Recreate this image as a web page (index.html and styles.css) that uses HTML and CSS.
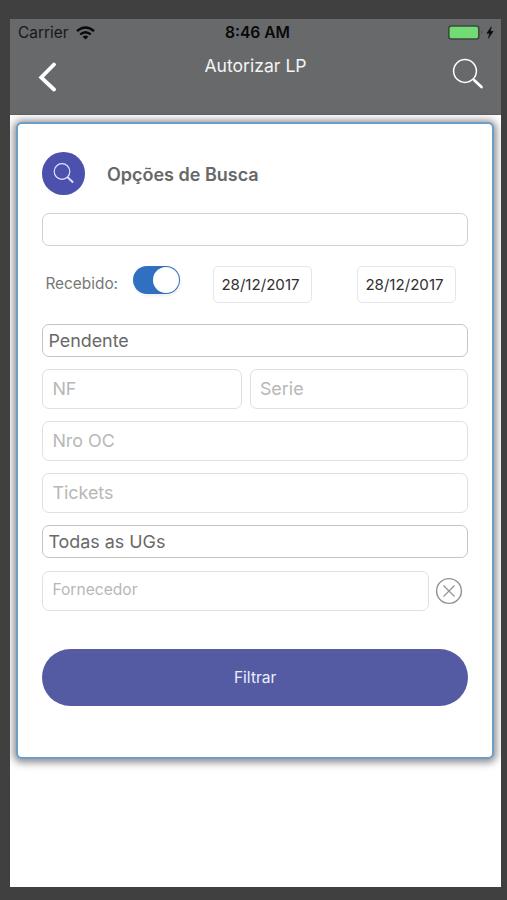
FILE: index.html
```html
<!DOCTYPE html>
<html lang="pt-BR">
<head>
<meta charset="utf-8">
<title>Autorizar LP</title>
<link rel="stylesheet" href="styles.css">
</head>
<body>
<main class="screen">
  <header class="header">
    <div class="status">
      <div class="carrier"><span>Carrier</span>
        <svg width="19" height="14" viewBox="0 0 19 14" fill="none" stroke="#090909" stroke-width="2.4"><path d="M1 5.2Q9.5-2 18 5.2"/><path d="M4.2 8.4Q9.5 4 14.8 8.4"/><path d="M6.6 10.7Q9.5 8.3 12.4 10.7L9.5 13.5Z" fill="#090909" stroke="none"/></svg>
      </div>
      <time class="clock">8:46 AM</time>
      <svg class="battery" width="47" height="16" viewBox="0 0 47 16"><rect x=".8" y="1" width="30" height="13" rx="2.5" fill="#73db73" stroke="#3e4840" stroke-width="1.6"/><path d="M33.3 5.3q1.5 2.2 0 4.4Z" fill="#353535"/><path d="M43.3 1.7 38.8 8.3h2.8l-1.2 5 4.8-7h-2.9Z" fill="#080808" stroke="#080808" stroke-width=".5"/></svg>
    </div>
    <nav class="nav">
      <svg width="20" height="30" viewBox="0 0 20 30" fill="none" stroke="#fff" stroke-width="3.8" stroke-linecap="round" stroke-linejoin="miter"><path d="M16 2.5 3.2 15.5 16 27.5"/></svg>
      <h1>Autorizar LP</h1>
      <svg class="nav-search" width="32" height="32" viewBox="0 0 32 32" fill="none" stroke="#fff"><circle cx="13" cy="13" r="11.4" stroke-width="1.5"/><path d="m21 21 2 2" stroke-width="1.6"/><path d="m22.5 22.5 7 6.5" stroke-width="2.8" stroke-linecap="round"/></svg>
    </nav>
  </header>
  <section class="card">
    <div class="heading">
      <span class="badge"><svg width="22" height="22" viewBox="0 0 22 22" fill="none" stroke="#dfe2ff"><circle cx="9" cy="8.5" r="7.8" stroke-width="1.2"/><path d="m14.5 14.1 5.6 5.4" stroke-width="2"/></svg></span>
      <h2>Opções de Busca</h2>
    </div>
    <div class="select blank"></div>
    <div class="received">
      <span class="label">Recebido:</span>
      <span class="switch"><span class="knob"></span></span>
      <div class="date first">28/12/2017</div>
      <div class="date">28/12/2017</div>
    </div>
    <div class="select"><span>Pendente</span></div>
    <div class="pair"><div class="input"><span>NF</span></div><div class="input"><span>Serie</span></div></div>
    <div class="input"><span>Nro OC</span></div>
    <div class="input"><span>Tickets</span></div>
    <div class="select"><span>Todas as UGs</span></div>
    <div class="supplier">
      <div class="input small"><span>Fornecedor</span></div>
      <svg width="28" height="28" viewBox="0 0 28 28" fill="none" stroke="#929292"><circle cx="14" cy="14" r="12.4" stroke-width="1.4"/><path d="m8.5 8.5 11 11m0-11-11 11" stroke-width="1.2"/></svg>
    </div>
    <div class="submit">Filtrar</div>
  </section>
</main>
</body>
</html>
```
FILE: styles.css
```css
* { box-sizing: border-box; }
body {
  margin: 0;
  height: 900px;
  padding: 19px 6px 13px 10px;
  overflow: hidden;
  background: #404040;
  font-family: Inter, "Liberation Sans", sans-serif;
}
.screen { height: 868px; overflow: hidden; background: #fff; }
.header { height: 96px; background: #68696b; border-bottom: 1px solid #626065; }
.status {
  display: grid;
  grid-template-columns: 1fr auto 1fr;
  align-items: center;
  height: 27px;
  padding: 0 6px 0 8px;
  color: #171717;
}
.carrier { display: flex; align-items: center; gap: 8px; font-size: 15.4px; }
.clock { padding-left: 2px; font-size: 15.6px; font-weight: 600; color: #080808; }
.battery { justify-self: end; }
.nav {
  display: grid;
  grid-template-columns: 1fr auto 1fr;
  padding: 0 17px;
  align-items: start;
}
.nav > svg { margin: 16px 0 0 11px; }
.nav h1 { margin: 8px 0 0; font-size: 17.6px; line-height: 24px; font-weight: 400; color: #f4f4f4; }
.nav .nav-search { justify-self: end; margin-top: 12px; }
.card {
  display: flex;
  flex-direction: column;
  height: 637px;
  margin: 7px 7px 0 6px;
  padding: 28.5px 24px 0 24.4px;
  border: 2px solid #6a9fc7;
  border-radius: 6px;
  background: #fff;
  box-shadow: 0 1px 7px 3px rgba(48, 43, 55, .5);
}
.heading { display: flex; align-items: center; gap: 22px; height: 42px; }
.badge {
  display: grid;
  place-items: center;
  width: 42.5px;
  height: 42.5px;
  border-radius: 50%;
  background: #4c51ae;
}
h2 { margin: 1px 0 0; font-size: 18px; font-weight: 600; color: #686868; }
.select {
  display: flex;
  align-items: center;
  height: 33px;
  padding-left: 5px;
  border: 1px solid #c4c4c4;
  border-radius: 7px;
  color: #696969;
  font-size: 17.9px;
}
.blank { margin-top: 18.5px; border-color: #d0d0d0; }
.received { display: flex; height: 37px; margin: 20px 0 21px; }
.label { width: 91px; padding: 8px 0 0 3px; font-size: 15.4px; line-height: 20px; color: #777; }
.switch {
  display: flex;
  justify-content: flex-end;
  width: 47px;
  height: 28px;
  padding: 1px;
  border-radius: 14px;
  background: #316fc1;
  box-shadow: 1px 2px 3px #0001;
}
.knob { width: 26px; height: 26px; border-radius: 50%; background: #fff; }
.date {
  display: flex;
  align-items: center;
  width: 99px;
  padding: 0 0 1px 7px;
  border: 1px solid #e6e6e6;
  border-radius: 5px;
  color: #303030;
  font-size: 15.1px;
}
.first { margin: 0 45px 0 33px; }
.input {
  display: flex;
  align-items: center;
  height: 40px;
  margin-bottom: 12px;
  padding: 0 0 2px 9px;
  border: 1px solid #e0e0e0;
  border-radius: 7px;
  color: #b7b7b7;
  font-size: 17.9px;
}
.pair { display: grid; grid-template-columns: 200px 1fr; gap: 7.5px; margin-top: 12px; }
.supplier { display: grid; grid-template-columns: 386.5px 28px; gap: 6.5px; align-items: center; margin-top: 12.5px; }
.supplier .input { margin: 0; }
.input.small { font-size: 15.6px; }
.submit {
  display: grid;
  place-items: center;
  height: 57.5px;
  margin-top: 38px;
  border-radius: 29px;
  background: #545ba3;
  color: #eceefb;
  font-size: 15.6px;
}
```
